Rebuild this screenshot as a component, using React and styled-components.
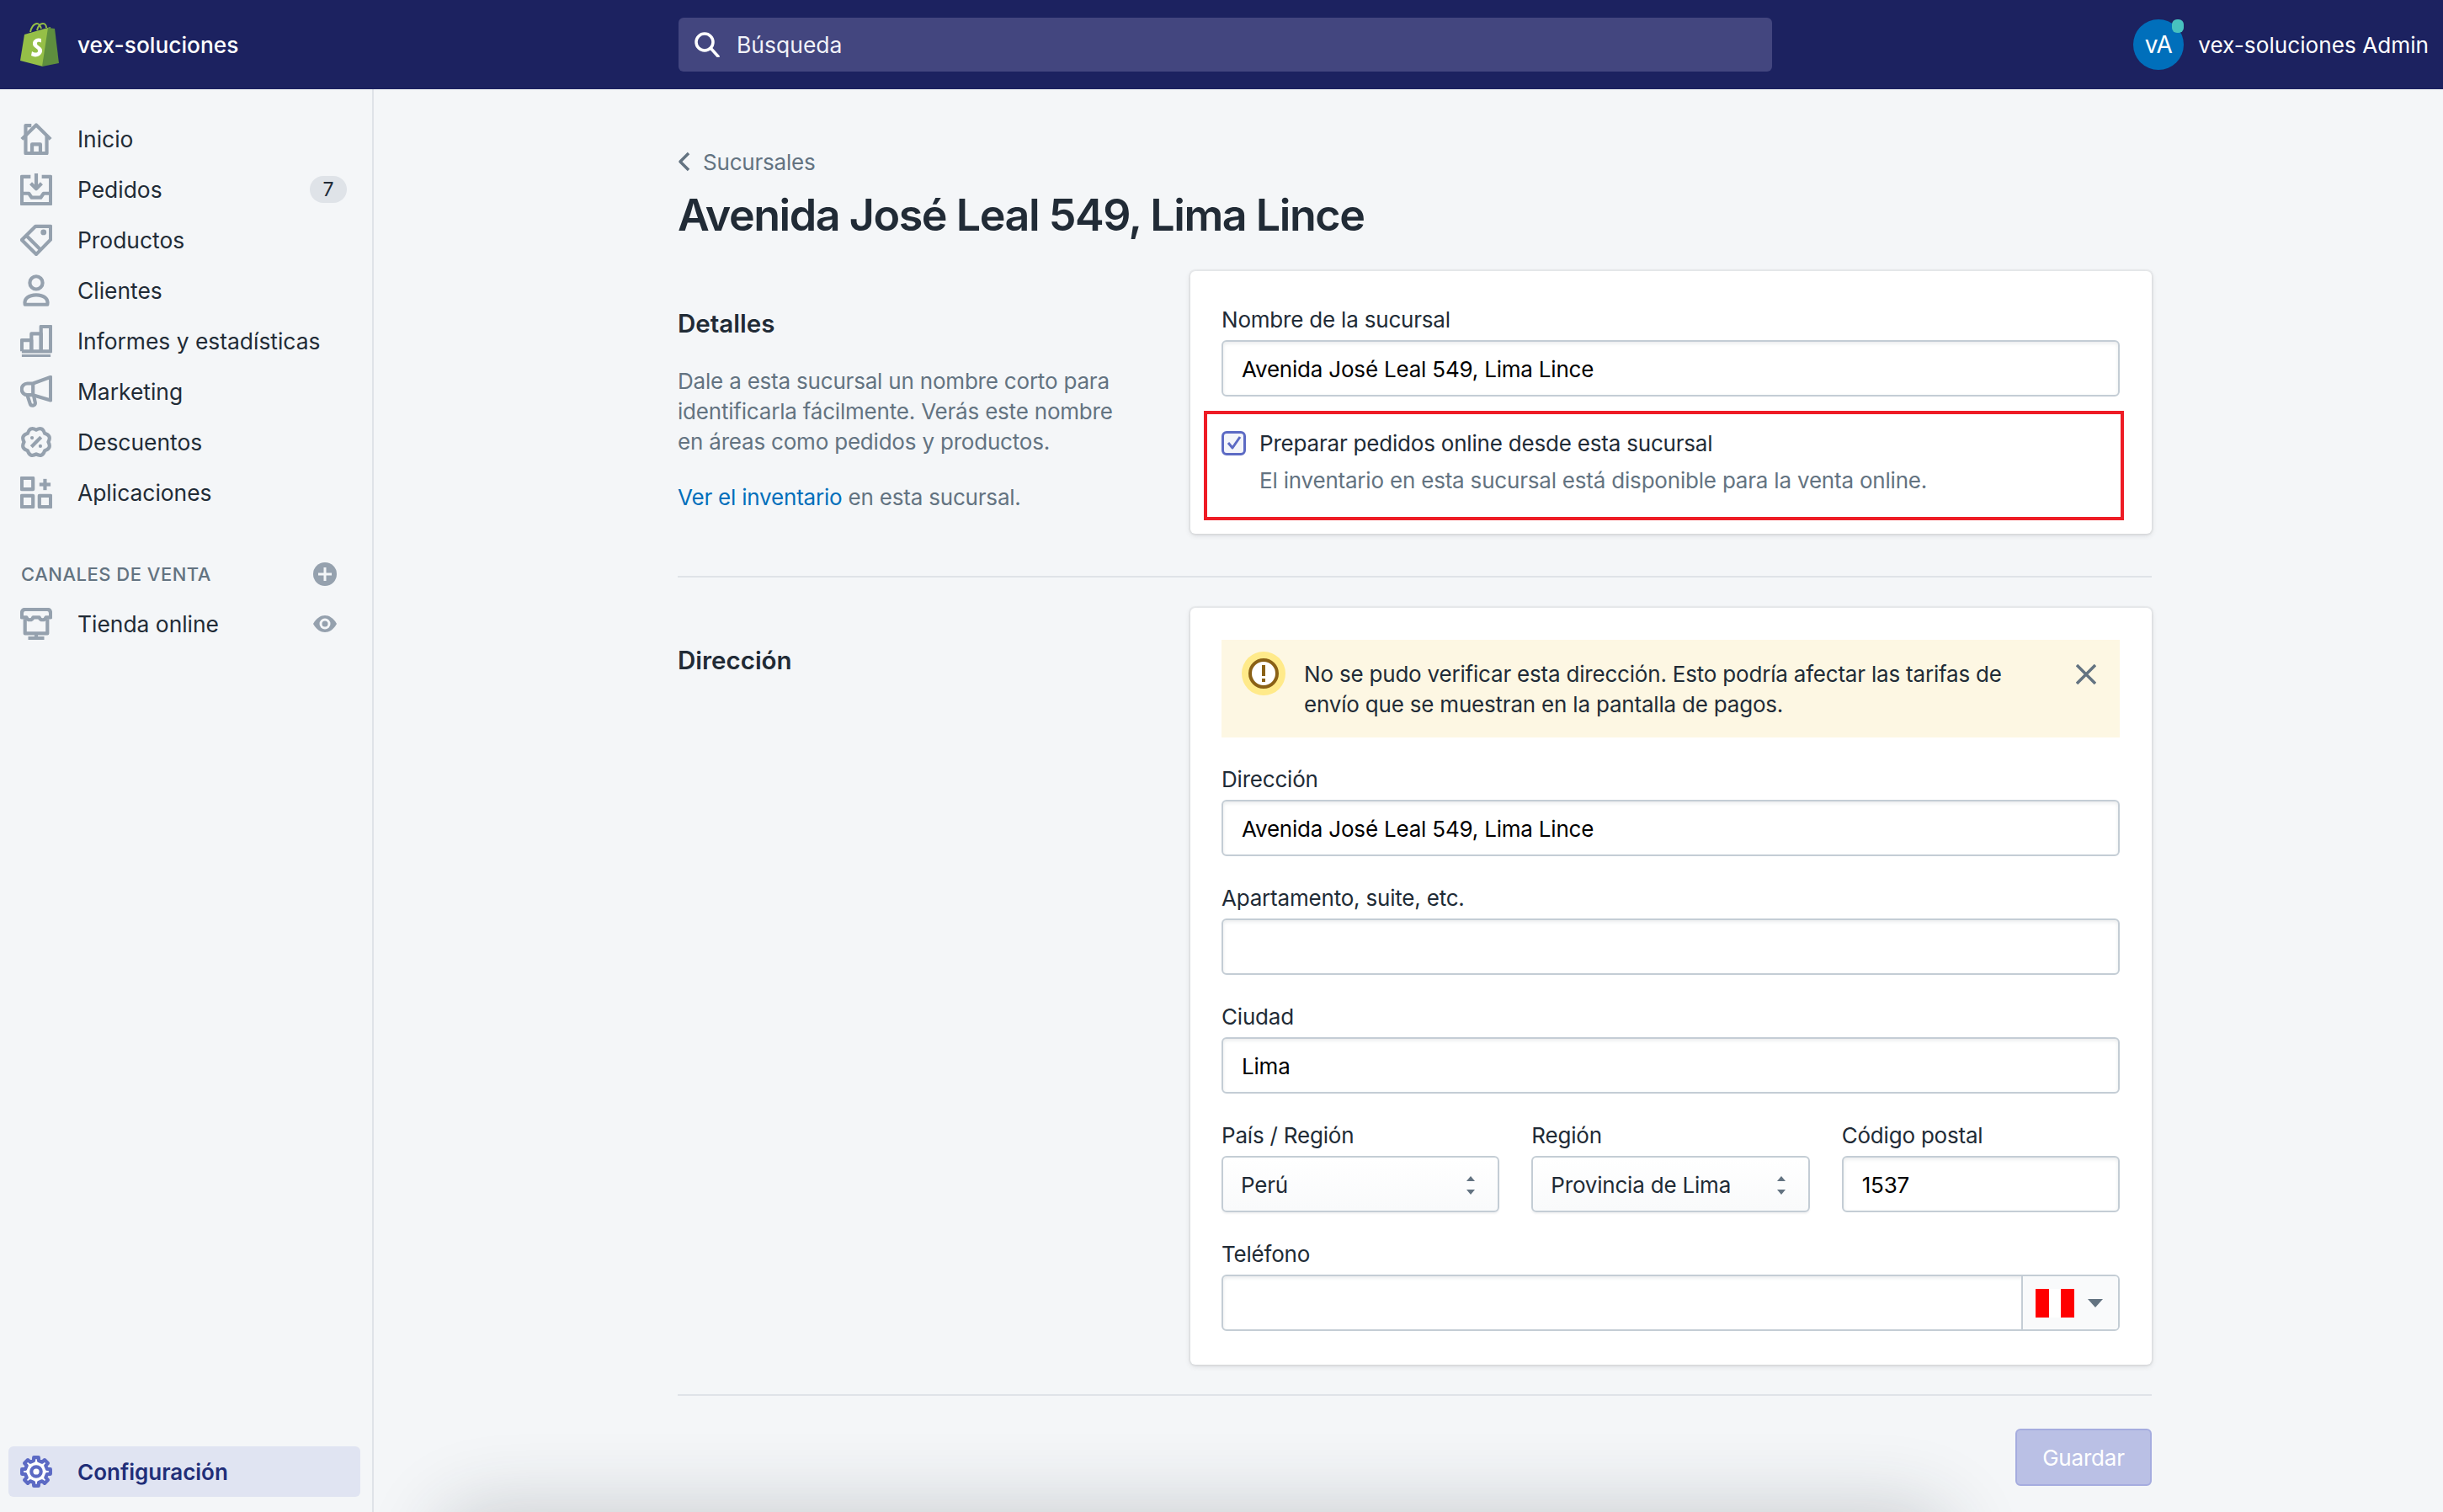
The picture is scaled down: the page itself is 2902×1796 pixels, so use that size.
import React from "react";
import styled, { createGlobalStyle } from "styled-components";

const GlobalStyle = createGlobalStyle`
  html, body {
    margin: 0;
    padding: 0;
    background: #f4f6f8;
  }
  * {
    box-sizing: border-box;
  }
  body {
    font-family: Inter, "Noto Sans", "Liberation Sans", sans-serif;
    color: #212b36;
  }
`;

// scalloped outline of the discount badge
const scallop = () => {
  const n = 8;
  let d = "";
  for (let i = 0; i < n; i++) {
    const a = (i / n) * Math.PI * 2 - Math.PI / 2;
    const b = ((i + 1) / n) * Math.PI * 2 - Math.PI / 2;
    const m = (a + b) / 2;
    const p = (r, t) => `${(10 + r * Math.cos(t)).toFixed(2)} ${(10 + r * Math.sin(t)).toFixed(2)}`;
    if (i === 0) d += `M${p(7.6, a)}`;
    d += `Q${p(10.6, m)} ${p(7.6, b)}`;
  }
  return d + "Z";
};

// eight tooth gear outline
const gear = () => {
  const n = 8;
  const pts = [];
  for (let i = 0; i < n; i++) {
    const t = (i / n) * Math.PI * 2 - Math.PI / 2;
    const s = Math.PI / n;
    const p = (r, a) => `${(10 + r * Math.cos(a)).toFixed(2)} ${(10 + r * Math.sin(a)).toFixed(2)}`;
    pts.push(p(9, t - s * 0.42), p(9, t + s * 0.42), p(7, t + s * 0.58), p(7, t + s * 1.42));
  }
  return "M" + pts.join("L") + "Z";
};

const Svg = styled.svg`
  width: ${(p) => p.$size || 38}px;
  height: ${(p) => p.$size || 38}px;
  flex: none;
  fill: none;
  stroke: ${(p) => p.$color || "#95a1ae"};
  stroke-width: 2.2;
  stroke-linejoin: round;
`;

const icons = {
  home: (
    <>
      <path d="M1 10.2 10 1.3l9 8.9" />
      <path d="M3.4 8v11h13.2V8" />
      <path d="M7.4 19v-5.6h5.2V19" />
      <path d="M3.4 7.6V1.6h3.6" />
    </>
  ),
  orders: (
    <>
      <path d="M6.5 2H1v17h18V2h-5.5" />
      <path d="M1 12.5h4.4l1.8 2.6h5.6l1.8-2.6H19" />
      <path d="M10 0v9" />
      <path d="M6.6 6.2 10 9.6l3.4-3.4" />
    </>
  ),
  tag: (
    <>
      <path d="M19 1.5v8.3L10 19 1 10l8.600-8.500z" />
      <path d="M3.800 7.200l9 9" />
      <circle cx="14.600" cy="5.200" r=".7" fill="#95a1ae" />
    </>
  ),
  customer: (
    <>
      <circle cx="10" cy="5.200" r="4" />
      <path d="M3 18.800c-.8-3.600 2.400-6 7-6s7.800 2.400 7 6z" />
    </>
  ),
  reports: (
    <>
      <path d="M1 16.500V9.500h6v7" />
      <path d="M7 16.500V5.500h6v11" />
      <path d="M13 16.500V1h6v15.500H1" />
      <path d="M1 19.500h18" />
    </>
  ),
  marketing: (
    <>
      <path d="M19 1v14.500L8 12.200H4.500a3.600 3.600 0 0 1 0-7.200H8z" />
      <path d="M8 5v7" />
      <path d="M4.500 12.500l1.700 5.200c.5 1.700 3.500 1.300 3.200-.6l-1-4.700" />
    </>
  ),
  discounts: (
    <>
      <path d={scallop()} />
      <path d="M13 7l-6 6" />
      <circle cx="7.400" cy="7.400" r="1.100" fill="#95a1ae" stroke="none" />
      <circle cx="12.600" cy="12.600" r="1.100" fill="#95a1ae" stroke="none" />
    </>
  ),
  apps: (
    <>
      <rect x="1" y="1" width="7" height="7" />
      <rect x="1" y="12" width="7" height="7" />
      <rect x="12" y="12" width="7" height="7" />
      <path d="M15.500 1.500v7" />
      <path d="M12 5h7" />
    </>
  ),
  store: (
    <>
      <path d="M3 1h14c1.500 0 2 1 2 2.500V6h-3c-.5 2-3.500 2-4 0h-4c-.5 2-3.500 2-4 0H1V3.500C1 2 1.500 1 3 1z" />
      <path d="M3 7v9h14V7" />
      <path d="M10 16v3" />
      <path d="M5 19h10" />
    </>
  ),
};

const Page = styled.div`
  width: 2902px;
  height: 1796px;
  position: relative;
  overflow: hidden;
  display: flex;
  flex-direction: column;
`;

const TopBar = styled.header`
  height: 106px;
  flex: none;
  background: #1c2260;
  display: flex;
  align-items: center;
  color: #fff;
`;

const Brand = styled.div`
  width: 806px;
  padding-left: 24px;
  display: flex;
  align-items: center;
  gap: 22px;
  font-size: 26.300px;
  font-weight: 500;
`;

const Search = styled.div`
  width: 1299px;
  height: 64px;
  border-radius: 6px;
  background: #43467f;
  padding-left: 19px;
  display: flex;
  align-items: center;
  gap: 20px;
  font-size: 26.500px;
  color: #f1f2f8;
`;

const User = styled.div`
  margin-left: auto;
  padding-right: 17px;
  display: flex;
  align-items: center;
  gap: 17px;
  font-size: 26.200px;
`;

const Avatar = styled.div`
  width: 60px;
  height: 60px;
  border-radius: 50%;
  background: #006fbb;
  position: relative;
  display: flex;
  align-items: center;
  justify-content: center;
  font-size: 28px;
`;

const AvatarDot = styled.span`
  position: absolute;
  top: 0;
  right: 0;
  width: 14px;
  height: 16px;
  border-radius: 6px;
  background: #47c1bf;
`;

const Body = styled.div`
  flex: 1;
  display: flex;
  min-height: 0;
`;

const Sidebar = styled.nav`
  width: 444px;
  flex: none;
  border-right: 2px solid #dfe3e8;
  padding: 29px 0 18px;
  display: flex;
  flex-direction: column;
`;

const NavRow = styled.div`
  height: ${(p) => p.$h || 60}px;
  flex: none;
  padding: 0 ${(p) => p.$pr || 0}px 0 24px;
  display: flex;
  align-items: center;
  gap: 30px;
  font-size: 26.400px;
  color: #212b36;
`;

const NavLabel = styled.span`
  flex: 1;
`;

const Badge = styled.span`
  width: 44px;
  height: 32px;
  margin-right: -2px;
  border-radius: 16px;
  background: #dfe3e8;
  display: flex;
  align-items: center;
  justify-content: center;
  font-size: 23px;
`;

const SectionHead = styled.div`
  height: 60px;
  flex: none;
  margin-top: 37px;
  padding: 0 42px 0 25px;
  display: flex;
  align-items: center;
  justify-content: space-between;
  font-size: 22px;
  font-weight: 500;
  letter-spacing: 0.5px;
  color: #637381;
`;

const ConfigRow = styled.div`
  margin: auto 14px 0 10px;
  height: 60px;
  border-radius: 6px;
  background: #e0e4f2;
  padding-left: 14px;
  display: flex;
  align-items: center;
  gap: 30px;
  font-size: 26px;
  font-weight: 600;
  color: #202e78;
`;

const Main = styled.main`
  flex: 1;
  padding: 68px 346px 0 361px;
  font-size: 26px;
  letter-spacing: -0.2px;
`;

const BackLink = styled.div`
  height: 36px;
  display: flex;
  align-items: center;
  gap: 14px;
  color: #637381;
  margin-bottom: 14px;
`;

const Title = styled.h1`
  margin: 0 0 34px;
  font-size: 52px;
  line-height: 64px;
  letter-spacing: -1.45px;
  font-weight: 600;
  color: #212b36;
`;

const Section = styled.section`
  display: grid;
  grid-template-columns: 609px 1142px;
`;

const Intro = styled.div`
  padding-top: 42px;
`;

const IntroTitle = styled.h2`
  margin: 0 0 31px;
  font-size: 29.500px;
  letter-spacing: 0;
  line-height: 40px;
  font-weight: 600;
`;

const IntroText = styled.p`
  margin: ${(p) => (p.$spaced ? "30px 0 0" : "0")};
  line-height: 36px;
  color: #637381;
`;

const Link = styled.span`
  color: #006fbb;
`;

const Card = styled.div`
  background: #fff;
  border-radius: 6px;
  box-shadow: 0 0 0 2px rgba(63, 63, 68, 0.05), 0 2px 6px rgba(63, 63, 68, 0.15);
  padding: ${(p) => p.$pad};
`;

const Divider = styled.hr`
  margin: ${(p) => p.$margin};
  border: 0;
  height: 2px;
  background: #dfe3e8;
`;

const Fields = styled.div`
  display: flex;
  flex-direction: column;
  gap: 30px;
`;

const Columns = styled.div`
  display: grid;
  grid-template-columns: repeat(3, 1fr);
  column-gap: 38px;
`;

const Label = styled.label`
  display: block;
  line-height: 40px;
  margin-bottom: 4px;
  color: #212b36;
`;

const TextInput = styled.input`
  display: block;
  width: 100%;
  height: 67px;
  padding: 2px 22px 0;
  border: 2px solid #c4cdd5;
  border-radius: 6px;
  background: #fff;
  box-shadow: inset 0 2px 4px rgba(102, 113, 123, 0.14);
  font: inherit;
  font-size: 26px;
  letter-spacing: -0.2px;
  color: #000;
  outline: 0;
`;

const SelectBox = styled.div`
  height: 67px;
  padding: 2px 26px 0 21px;
  border: 2px solid #c4cdd5;
  border-radius: 6px;
  background: linear-gradient(#fff, #f9fafb);
  box-shadow: 0 2px 2px rgba(22, 29, 37, 0.05);
  display: flex;
  align-items: center;
  justify-content: space-between;
  color: #212b36;
`;

const PhoneBox = styled.div`
  height: 67px;
  border: 2px solid #c4cdd5;
  border-radius: 6px;
  display: flex;
  overflow: hidden;
  box-shadow: inset 0 2px 4px rgba(102, 113, 123, 0.14);
`;

const PhoneInput = styled.div`
  flex: 1;
`;

const FlagPicker = styled.div`
  width: 115px;
  border-left: 2px solid #c4cdd5;
  background: #f9fafb;
  padding-left: 15px;
  display: flex;
  align-items: center;
  gap: 16px;
`;

const Flag = styled.div`
  width: 46px;
  height: 34px;
  background: linear-gradient(90deg, #f00 16px, #fff 16px, #fff 30px, #f00 30px);
`;

const Caret = styled.span`
  width: 0;
  height: 0;
  border-left: 9px solid transparent;
  border-right: 9px solid transparent;
  border-top: 10px solid #637381;
`;

const RedBox = styled.div`
  margin: 17px -5px 0 -21px;
  height: 130px;
  border: 4px solid #ee1c25;
  padding: 17px 0 0 17px;
`;

const CheckRow = styled.div`
  display: flex;
  align-items: center;
  gap: 16px;
  line-height: 36px;
`;

const CheckBox = styled.span`
  width: 29px;
  height: 29px;
  flex: none;
  margin-top: -2px;
  border: 3px solid #5c6ac4;
  border-radius: 6px;
  background: #f4f5fa;
  display: flex;
  align-items: center;
  justify-content: center;
`;

const HelpText = styled.div`
  margin: 8px 0 0 45px;
  line-height: 36px;
  color: #637381;
`;

const Banner = styled.div`
  height: 116px;
  margin-bottom: 30px;
  background: #fdf7e3;
  padding: 22px 28px 0 24px;
  display: flex;
  align-items: flex-start;
`;

const BannerText = styled.div`
  flex: 1;
  margin: 1px 70px 0 22px;
  line-height: 36px;
  color: #212b36;
`;

const Actions = styled.div`
  display: flex;
  justify-content: flex-end;
`;

const SaveButton = styled.button`
  width: 162px;
  height: 68px;
  border: 2px solid #a5acdf;
  border-radius: 6px;
  background: #bac0e5;
  color: #fff;
  font: inherit;
  font-size: 26px;
  letter-spacing: -0.2px;
`;

const BottomGlow = styled.div`
  position: absolute;
  left: 560px;
  top: 1830px;
  width: 1720px;
  height: 40px;
  border-radius: 20px;
  box-shadow: 0 0 90px 40px rgba(33, 43, 54, 0.2);
`;

const NavIcon = ({ name }) => <Svg viewBox="0 0 20 20">{icons[name]}</Svg>;

const ShopifyLogo = () => (
  <svg width="46" height="52" viewBox="0 0 46 52">
    <path d="M12 11c1-5 4-10 8-10 3 0 4 3 5 6M20 9c1-4 3-8 7-8 3 0 4 3 4 5" fill="none" stroke="#95bf47" strokeWidth="2" />
    <path d="M5 14 36 5l-9 47L0 45z" fill="#95bf47" />
    <path d="M33 6l8 1 5 41-20 4z" fill="#5e8e3e" />
    <path
      d="M25 19c-2-1-9-1-10 5-1 6 7 6 6 10-.5 2-4 2-7 0l-1 5c5 3 12 1 13-5 1-6-7-6-6-10 .3-1.500 3-1.500 5-.5z"
      fill="#fff"
    />
  </svg>
);

const SelectArrows = () => (
  <svg width="12" height="24" viewBox="0 0 12 24">
    <path d="M6 1l5 6H1zM6 23l-5-6h10z" fill="#637381" />
  </svg>
);

const navItems = [
  ["home", "Inicio"],
  ["orders", "Pedidos", 7],
  ["tag", "Productos"],
  ["customer", "Clientes"],
  ["reports", "Informes y estadísticas"],
  ["marketing", "Marketing"],
  ["discounts", "Descuentos"],
  ["apps", "Aplicaciones"],
];

const App = () => {
  return (
    <Page>
      <GlobalStyle />
      <TopBar>
        <Brand>
          <ShopifyLogo />
          vex-soluciones
        </Brand>
        <Search>
          <Svg $size={30} $color="#fff" viewBox="0 0 30 30" style={{ strokeWidth: 3.500 }}>
            <circle cx="12" cy="12" r="10" />
            <path d="M19 19l9 10" strokeLinecap="round" />
          </Svg>
          Búsqueda
        </Search>
        <User>
          <Avatar>
            vA
            <AvatarDot />
          </Avatar>
          vex-soluciones Admin
        </User>
      </TopBar>

      <Body>
        <Sidebar>
          {navItems.map(([icon, label, badge]) => (
            <NavRow key={label} $pr={32}>
              <NavIcon name={icon} />
              <NavLabel>{label}</NavLabel>
              {badge && <Badge>{badge}</Badge>}
            </NavRow>
          ))}
          <SectionHead>
            CANALES DE VENTA
            <Svg $size={28} viewBox="0 0 28 28" style={{ stroke: "none" }}>
              <circle cx="14" cy="14" r="14" fill="#95a1ae" />
              <path d="M12.500 6h3v6.500H22v3h-6.500V22h-3v-6.500H6v-3h6.500z" fill="#f4f6f8" />
            </Svg>
          </SectionHead>
          <NavRow $h={58} $pr={42}>
            <NavIcon name="store" />
            <NavLabel>Tienda online</NavLabel>
            <Svg $size={28} viewBox="0 0 28 28" style={{ stroke: "none" }}>
              <path d="M0 14C4 7 9 4 14 4s10 3 14 10c-4 7-9 10-14 10S4 21 0 14z" fill="#95a1ae" />
              <circle cx="14" cy="14" r="6.500" fill="#f4f6f8" />
              <circle cx="14" cy="14" r="3.500" fill="#95a1ae" />
            </Svg>
          </NavRow>
          <ConfigRow>
            <Svg $color="#5c6ac4" viewBox="0 0 20 20">
              <path d={gear()} fill="#fff" />
              <circle cx="10" cy="10" r="3" fill="#fff" />
            </Svg>
            Configuración
          </ConfigRow>
        </Sidebar>

        <Main>
          <BackLink>
            <Svg $size={16} $color="#637381" viewBox="0 0 16 24" style={{ strokeWidth: 3.500, height: 24 }}>
              <path d="M13 2 3 12l10 10" />
            </Svg>
            Sucursales
          </BackLink>
          <Title>Avenida José Leal 549, Lima Lince</Title>

          <Section>
            <Intro>
              <IntroTitle>Detalles</IntroTitle>
              <IntroText>
                Dale a esta sucursal un nombre corto para
                <br />
                identificarla fácilmente. Verás este nombre
                <br />
                en áreas como pedidos y productos.
              </IntroText>
              <IntroText $spaced>
                <Link>Ver el inventario</Link> en esta sucursal.
              </IntroText>
            </Intro>
            <Card $pad="38px 38px 16px 37px">
              <Label>Nombre de la sucursal</Label>
              <TextInput readOnly defaultValue="Avenida José Leal 549, Lima Lince" />
              <RedBox>
                <CheckRow>
                  <CheckBox>
                    <Svg $size={20} $color="#5c6ac4" viewBox="0 0 20 20" style={{ strokeWidth: 3 }}>
                      <path d="M3 10l5 6 9-13" />
                    </Svg>
                  </CheckBox>
                  Preparar pedidos online desde esta sucursal
                </CheckRow>
                <HelpText>El inventario en esta sucursal está disponible para la venta online.</HelpText>
              </RedBox>
            </Card>
          </Section>

          <Divider $margin="50px 0 36px" />

          <Section>
            <Intro>
              <IntroTitle>Dirección</IntroTitle>
            </Intro>
            <Card $pad="38px 38px 40px 37px">
              <Banner>
                <Svg $size={52} viewBox="0 0 52 52" style={{ stroke: "none", marginTop: -8 }}>
                  <circle cx="26" cy="26" r="26" fill="#ffea8a" />
                  <circle cx="26" cy="26" r="16" fill="#fff" stroke="#8a6116" strokeWidth="4" />
                  <path d="M24 16h4v13h-4zM24 32h4v4h-4z" fill="#8a6116" />
                </Svg>
                <BannerText>
                  No se pudo verificar esta dirección. Esto podría afectar las tarifas de envío que se muestran en la pantalla de pagos.
                </BannerText>
                <Svg $size={24} $color="#637381" viewBox="0 0 24 24" style={{ strokeWidth: 3.500, marginTop: 7 }}>
                  <path d="M1 1l22 22M23 1 1 23" />
                </Svg>
              </Banner>
              <Fields>
                <div>
                  <Label>Dirección</Label>
                  <TextInput readOnly defaultValue="Avenida José Leal 549, Lima Lince" />
                </div>
                <div>
                  <Label>Apartamento, suite, etc.</Label>
                  <TextInput readOnly />
                </div>
                <div>
                  <Label>Ciudad</Label>
                  <TextInput readOnly defaultValue="Lima" />
                </div>
                <Columns>
                  <div>
                    <Label>País / Región</Label>
                    <SelectBox>
                      Perú
                      <SelectArrows />
                    </SelectBox>
                  </div>
                  <div>
                    <Label>Región</Label>
                    <SelectBox>
                      Provincia de Lima
                      <SelectArrows />
                    </SelectBox>
                  </div>
                  <div>
                    <Label>Código postal</Label>
                    <TextInput readOnly defaultValue="1537" />
                  </div>
                </Columns>
                <div>
                  <Label>Teléfono</Label>
                  <PhoneBox>
                    <PhoneInput />
                    <FlagPicker>
                      <Flag />
                      <Caret />
                    </FlagPicker>
                  </PhoneBox>
                </div>
              </Fields>
            </Card>
          </Section>

          <Divider $margin="35px 0 39px" />

          <Actions>
            <SaveButton>Guardar</SaveButton>
          </Actions>
        </Main>
      </Body>
      <BottomGlow />
    </Page>
  );
};

export default App;
